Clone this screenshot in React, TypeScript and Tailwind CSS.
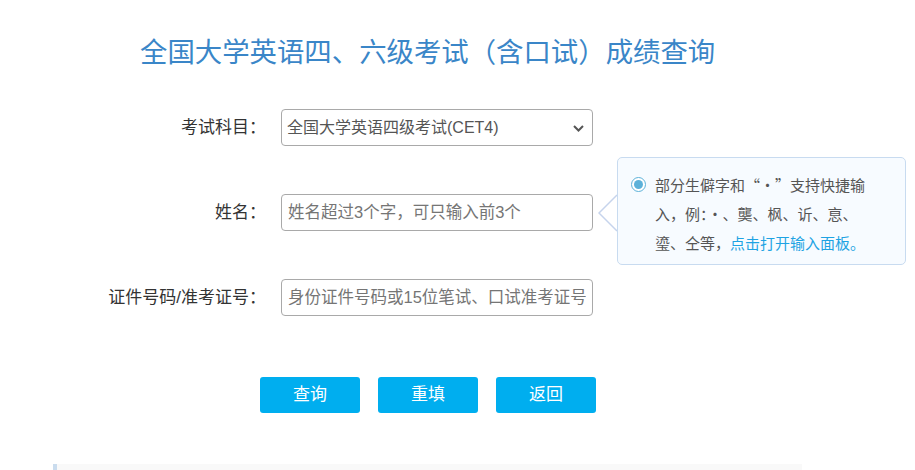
import { useState } from 'react';

const FONT = '"Liberation Sans", "Noto Sans CJK SC", sans-serif';

function Label({ children }: { children: string }) {
  return (
    <span className="w-[266px] shrink-0 text-right text-[17px] text-[#333]">{children}</span>
  );
}

function TextField({ placeholder }: { placeholder: string }) {
  return (
    <input
      type="text"
      placeholder={placeholder}
      className="h-[37px] w-[312px] rounded-[4px] border border-[#a9a9a9] bg-white px-[6px] text-[16.5px] text-[#555] outline-none placeholder:text-[#757575]"
    />
  );
}

// tooltip beside the name field: outlined left arrow + pale blue box
function Hint() {
  return (
    <div
      className="absolute left-[598px] top-[-37px] flex"
      style={{ fontFamily: '"Noto Sans CJK SC", sans-serif' }}
    >
      <svg width="20" height="38" viewBox="0 0 20 38" className="mt-[37px] -mr-px" aria-hidden>
        <polyline points="19,1 1,19 19,37" fill="none" stroke="#c6d4ec" strokeWidth="1.5" />
      </svg>
      <div className="h-[108px] w-[289px] rounded-[5px] border border-[#c8dbf0] bg-[#f7fbff] pl-[13px] pt-[12px] text-[15px] leading-[29px] text-[#555]">
        <div className="flex">
          <span className="mt-[7px] mr-[9px] flex h-[15px] w-[15px] shrink-0 items-center justify-center rounded-full border border-[#5cb1d9] bg-white">
            <span className="h-[9px] w-[9px] rounded-full bg-[#5cb1d9]" />
          </span>
          <p className="w-[216px]">
            部分生僻字和“·”支持快捷输入，例：·、龑、枫、䜣、恴、瑬、仝等，
            <span className="text-[#1ea3e3]">点击打开输入面板。</span>
          </p>
        </div>
      </div>
    </div>
  );
}

export default function App() {
  const [subject, setSubject] = useState('CET4');

  return (
    <div className="h-[470px] w-[915px] overflow-hidden bg-white" style={{ fontFamily: FONT }}>
      <h1 className="pl-[140px] pt-[35px] text-[27.4px] leading-[36px] text-[#3a86c8]">
        全国大学英语四、六级考试（含口试）成绩查询
      </h1>

      <div className="mt-[38px] flex flex-col gap-[48px]">
        <div className="flex items-center gap-[15px]">
          <Label>考试科目：</Label>
          <div className="relative">
            <select
              value={subject}
              onChange={(e) => setSubject(e.target.value)}
              className="h-[37px] w-[312px] appearance-none rounded-[4px] border border-[#a9a9a9] bg-white px-[5px] text-[16px] text-[#555] outline-none"
            >
              <option value="CET4">全国大学英语四级考试(CET4)</option>
              <option value="CET6">全国大学英语六级考试(CET6)</option>
            </select>
            <svg
              width="11"
              height="7"
              viewBox="0 0 11 7"
              className="pointer-events-none absolute right-[9px] top-[16px]"
              aria-hidden
            >
              <polyline points="1,1 5.5,5.5 10,1" fill="none" stroke="#555" strokeWidth="2" />
            </svg>
          </div>
        </div>

        <div className="relative flex items-center gap-[15px]">
          <Label>姓名：</Label>
          <TextField placeholder="姓名超过3个字，可只输入前3个" />
          <Hint />
        </div>

        <div className="flex items-center gap-[15px]">
          <Label>证件号码/准考证号：</Label>
          <TextField placeholder="身份证件号码或15位笔试、口试准考证号" />
        </div>
      </div>

      <div className="mt-[61px] flex gap-[18px] pl-[260px]">
        {['查询', '重填', '返回'].map((t) => (
          <button
            key={t}
            type="button"
            className="h-[36px] w-[100px] rounded-[3px] bg-[#00aeef] text-[17px] text-white"
          >
            {t}
          </button>
        ))}
      </div>

      <div className="ml-[53px] mt-[51px] h-[20px] w-[749px] border-l-[4px] border-[#cadcee] bg-[#f9f9f9]" />
    </div>
  );
}
